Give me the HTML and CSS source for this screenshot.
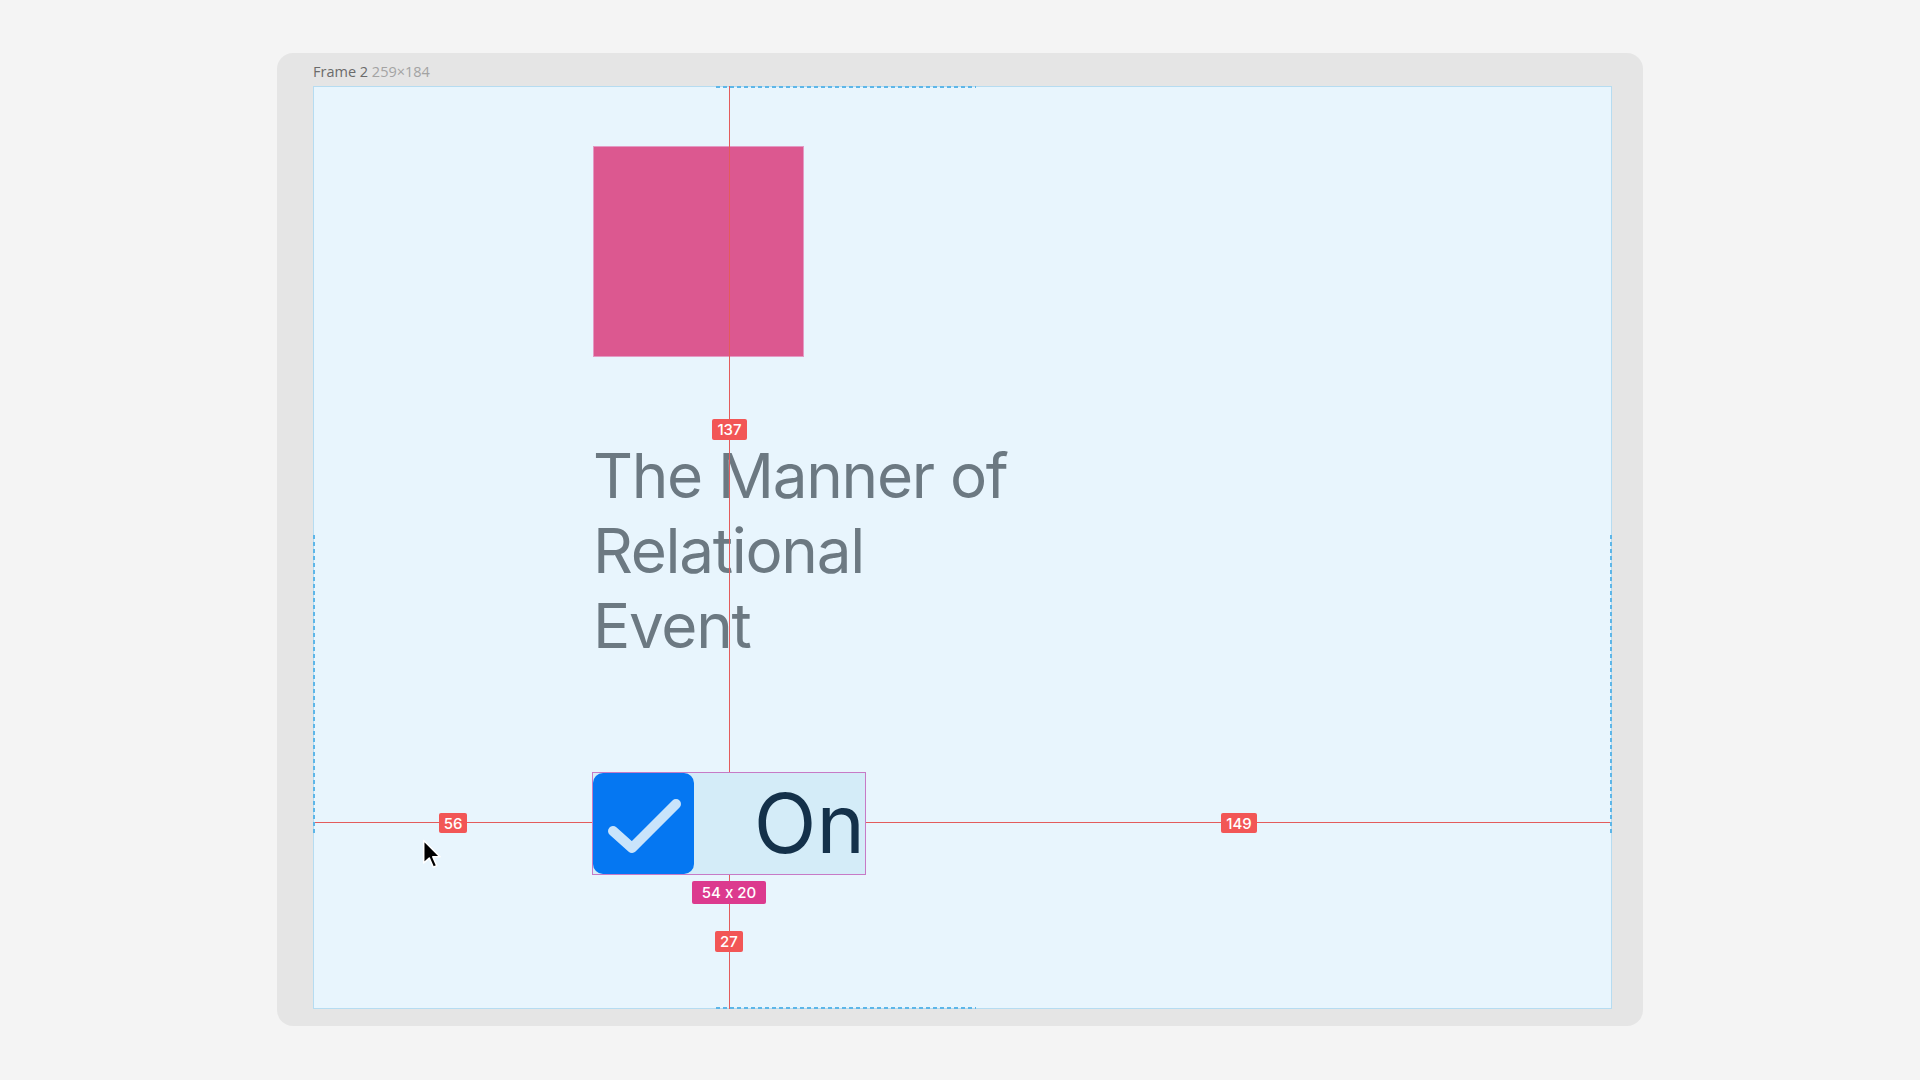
FILE: index.html
```html
<!DOCTYPE html>
<html>
<head>
<meta charset="utf-8">
<link rel="stylesheet" href="styles.css">
</head>
<body>
<div class="panel">
  <div class="frame-label">Frame 2 <span class="dims">259×184</span></div>
  <div class="frame">
    <div class="square"></div>
    <div class="title">The Manner of Relational Event</div>
    <div class="toggle">
      <div class="check">
        <svg viewBox="0 0 100 100" width="100" height="100">
          <path d="M20 57 L39 74 L83 30" fill="none" stroke="#c9e4fb" stroke-width="10" stroke-linecap="round" stroke-linejoin="round"/>
        </svg>
      </div>
      <div class="on">On</div>
    </div>

    <div class="vline"></div>
    <div class="hline"></div>
    <div class="dash-h dash-top"></div>
    <div class="dash-h dash-bottom"></div>
    <div class="dash-v dash-left"></div>
    <div class="dash-v dash-right"></div>

    <div class="tag tag-137">137</div>
    <div class="tag tag-56">56</div>
    <div class="tag tag-149">149</div>
    <div class="tag tag-size">54 x 20</div>
    <div class="tag tag-27">27</div>

    <svg class="cursor" viewBox="0 0 14 20" width="22" height="31">
      <path d="M1 1 L1 15.5 L4.6 12.3 L7.2 18.2 L9.4 17.2 L6.9 11.5 L11.6 11.5 Z" fill="#000" stroke="#fff" stroke-width="1" stroke-linejoin="round"/>
    </svg>
  </div>
</div>
</body>
</html>
```

FILE: styles.css
```css
html, body {
  margin: 0;
  padding: 0;
}
body {
  background: #f4f4f4;
  width: 1920px;
  height: 1080px;
  overflow: hidden;
  font-family: Inter, "Noto Sans", sans-serif;
}
.panel {
  box-sizing: border-box;
  margin: 53px 0 0 277px;
  width: 1366px;
  height: 973px;
  background: #e5e5e5;
  border-radius: 16px;
  padding: 0 31px 17px 36px;
}
.frame-label {
  height: 33px;
  line-height: 38px;
  font-family: "Open Sans", "Noto Sans", sans-serif;
  font-size: 14.5px;
  color: #6b6b6b;
  white-space: nowrap;
}
.frame-label .dims {
  color: #a3a3a3;
}
.frame {
  position: relative;
  box-sizing: border-box;
  width: 1299px;
  height: 923px;
  background: #e8f5fd;
  border: 1px solid #b6dcf1;
  padding: 59px 0 0 279px;
}
.square {
  box-sizing: border-box;
  width: 211px;
  height: 211px;
  background: #dc5890;
  border: 1px solid #e39ac4;
}
.title {
  margin-top: 81px;
  width: 440px;
  font-size: 62px;
  line-height: 75px;
  letter-spacing: -1.3px;
  color: #6c7982;
  font-weight: 400;
}
.toggle {
  position: relative;
  z-index: 3;
  margin-top: 110px;
  box-sizing: border-box;
  width: 272px;
  height: 101px;
  background: #d4ecf8;
  box-shadow: 0 0 0 1px #c77ac6;
  display: flex;
  align-items: center;
  gap: 60px;
}
.check {
  width: 101px;
  height: 101px;
  background: #0577f2;
  border-radius: 10px;
  display: flex;
  align-items: center;
  justify-content: center;
}
.check svg {
  display: block;
}
.on {
  font-size: 82px;
  line-height: 101px;
  color: #14314a;
  white-space: nowrap;
}
.vline {
  position: absolute;
  z-index: 2;
  left: 415px;
  top: -1px;
  width: 1px;
  height: 923px;
  background: #e35c5c;
}
.hline {
  position: absolute;
  z-index: 2;
  left: -1px;
  top: 735px;
  width: 1299px;
  height: 1px;
  background: #e35c5c;
}
.dash-h {
  position: absolute;
  z-index: 2;
  left: 402px;
  width: 260px;
  height: 2px;
  background: repeating-linear-gradient(90deg, #5db6e8 0 4px, transparent 4px 7px);
}
.dash-top { top: -1px; }
.dash-bottom { top: 920px; }
.dash-v {
  position: absolute;
  z-index: 2;
  top: 448px;
  width: 2px;
  height: 301px;
  background: repeating-linear-gradient(180deg, #5db6e8 0 4px, transparent 4px 7px);
}
.dash-left { left: -1px; }
.dash-right { left: 1296px; }
.tag {
  position: absolute;
  z-index: 4;
  box-sizing: border-box;
  background: #f25656;
  color: #fff;
  font-size: 15px;
  font-weight: 500;
  font-feature-settings: "calt" 0;
  border-radius: 2px;
  display: flex;
  align-items: center;
  justify-content: center;
  white-space: nowrap;
}
.tag-137 { left: 398px; top: 332px; width: 35px; height: 21px; }
.tag-56 { left: 125px; top: 726px; width: 28px; height: 20px; }
.tag-149 { left: 907px; top: 726px; width: 36px; height: 20px; }
.tag-size { left: 378px; top: 794px; width: 74px; height: 23px; background: #dc3a8e; }
.tag-27 { left: 401px; top: 844px; width: 28px; height: 21px; }
.cursor {
  position: absolute;
  z-index: 5;
  left: 108px;
  top: 752px;
}
```
